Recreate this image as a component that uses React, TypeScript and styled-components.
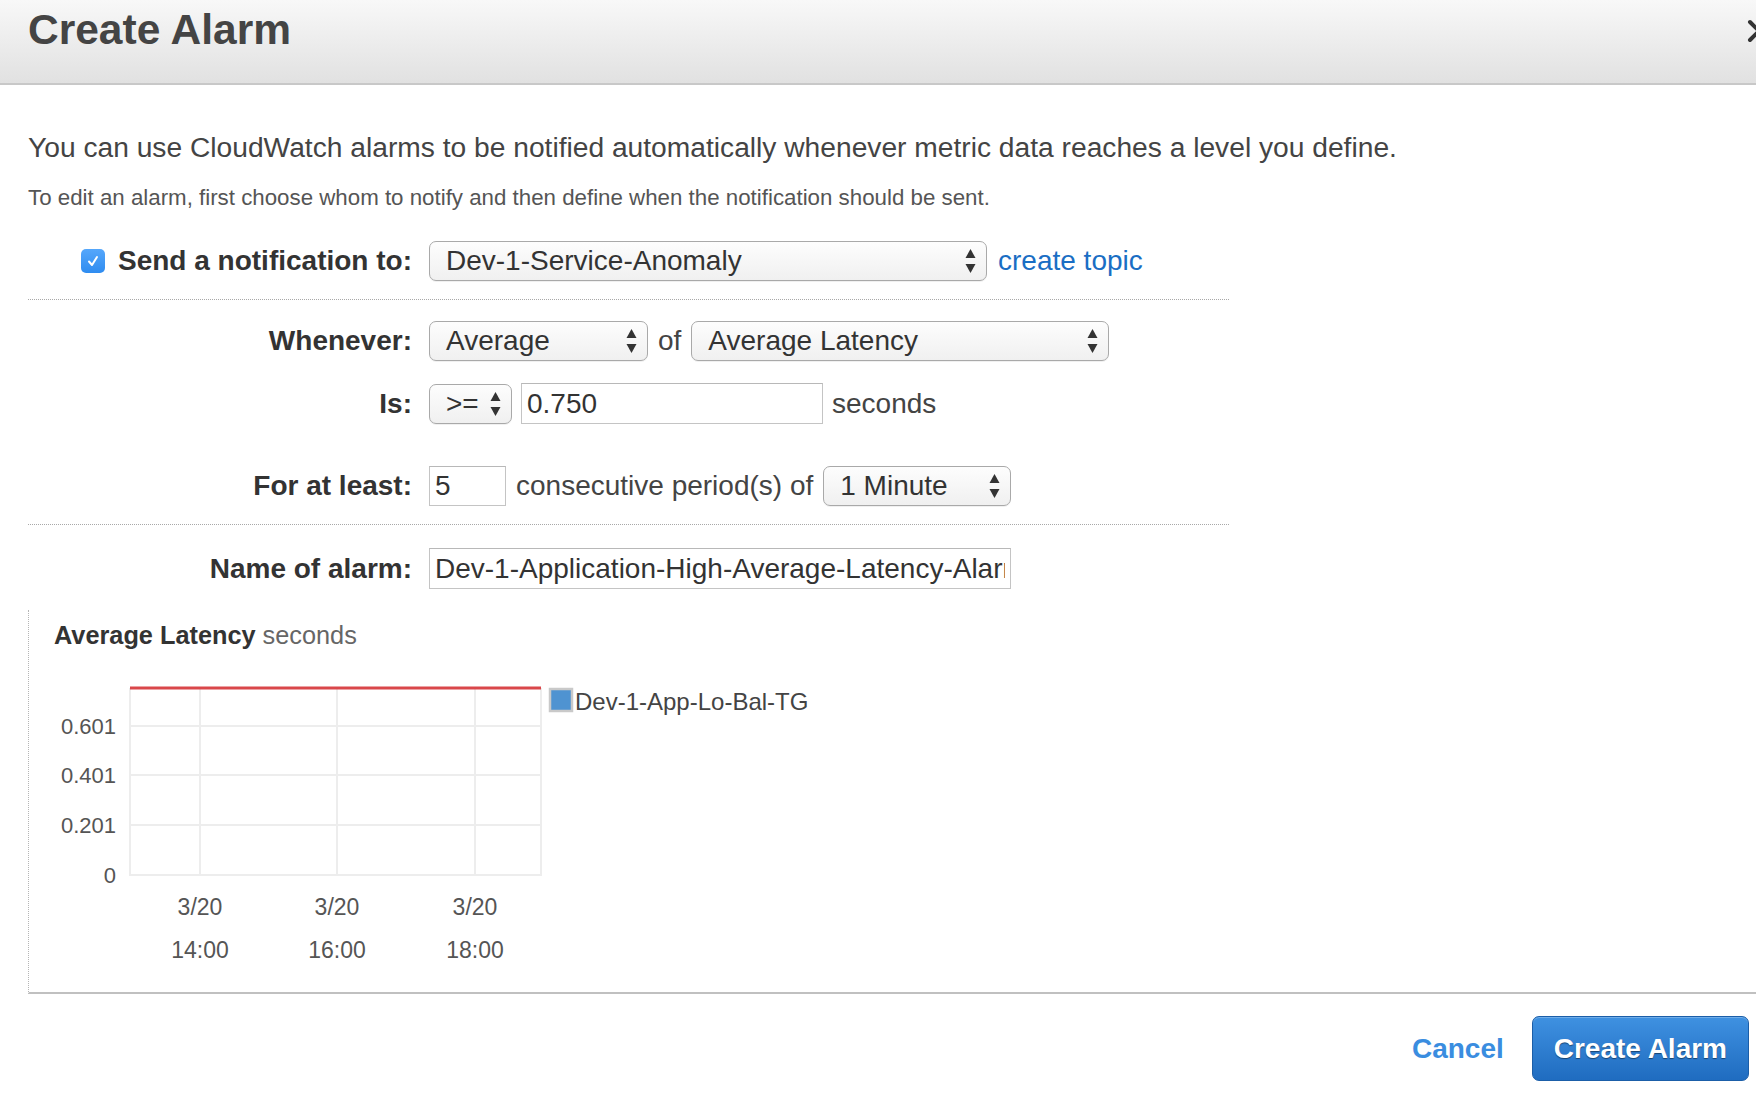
import React from "react";
import styled, { createGlobalStyle } from "styled-components";

const GlobalStyle = createGlobalStyle`
  html, body { margin: 0; padding: 0; background: #fff; }
  body {
    font-family: "Liberation Sans", Arial, Helvetica, sans-serif;
    color: #444;
    overflow: hidden;
  }
  * { box-sizing: border-box; }
`;

const Page = styled.div`
  position: relative;
  width: 1756px;
  height: 1096px;
  overflow: hidden;
  background: #fff;
`;

const Header = styled.header`
  position: relative;
  height: 85px;
  padding: 9px 0 0 28px;
  background: linear-gradient(#f8f8f8, #e1e1e1);
  border-bottom: 2px solid #c8c8c8;
`;

const Title = styled.h1`
  margin: 0;
  font-size: 42.5px;
  line-height: 42px;
  font-weight: 700;
  color: #444;
`;

const CloseButton = styled.button`
  position: absolute;
  top: 18px;
  right: -16px;
  width: 26px;
  height: 26px;
  padding: 0;
  border: 0;
  background: none;
`;

const Body = styled.main`
  padding: 45px 0 0 28px;
`;

const Lead = styled.p`
  margin: 0;
  font-size: 28.2px;
  line-height: 34px;
  color: #444;
`;

const Hint = styled.p`
  margin: 20px 0 0;
  font-size: 22.3px;
  line-height: 28px;
  color: #555;
`;

const Form = styled.div`
  width: 1201px;
  margin-top: 29px;
`;

const Row = styled.div<{ $mt?: number }>`
  display: grid;
  grid-template-columns: 384px auto;
  column-gap: 17px;
  align-items: center;
  margin-top: ${(p) => p.$mt ?? 0}px;
`;

const Label = styled.label`
  justify-self: end;
  display: flex;
  align-items: center;
  gap: 13px;
  font-size: 28px;
  line-height: 40px;
  font-weight: 700;
  color: #333;
`;

const Controls = styled.div<{ $gap?: number }>`
  display: flex;
  align-items: center;
  gap: ${(p) => p.$gap ?? 9}px;
  font-size: 28px;
  color: #444;
`;

const Divider = styled.hr`
  margin: 18px 0 0;
  border: 0;
  border-top: 1px dotted #a8a8a8;
  height: 0;
`;

const Checkbox = styled.span`
  display: inline-flex;
  align-items: center;
  justify-content: center;
  width: 24px;
  height: 24px;
  border-radius: 5px;
  background: linear-gradient(#55a7fb, #2f8cf0);
`;

const SelectBox = styled.div<{ $w: number }>`
  width: ${(p) => p.$w}px;
  height: 40px;
  display: flex;
  align-items: center;
  justify-content: space-between;
  padding: 0 10px 0 16px;
  border: 1px solid #a9a9a9;
  border-radius: 7px;
  background: linear-gradient(#fdfdfd, #f0f0f0);
  box-shadow: 0 1px 0 rgba(0, 0, 0, 0.06);
  font-size: 28px;
  color: #333;
  white-space: nowrap;
`;

const TextInput = styled.input<{ $w: number; $h?: number }>`
  width: ${(p) => p.$w}px;
  height: ${(p) => p.$h ?? 40}px;
  padding: 0 5px;
  border: 1px solid #c4c4c4;
  border-top-color: #b8b8b8;
  border-radius: 0;
  background: #fff;
  font-family: inherit;
  font-size: 28px;
  color: #333;
  outline: none;
`;

const Link = styled.a`
  font-size: 28px;
  color: #1a6ec4;
  text-decoration: none;
`;

const ChartPanel = styled.section`
  margin-top: 21px;
  padding: 10px 0 22px 25px;
  border-left: 1px dotted #b5b5b5;
  border-bottom: 2px solid #c0c0c0;
`;

const ChartTitle = styled.h2`
  margin: 0;
  font-size: 25.3px;
  line-height: 30px;
  font-weight: 700;
  color: #333;
`;

const Unit = styled.span`
  font-weight: 400;
  color: #666;
`;

const ChartSvg = styled.svg`
  display: block;
  margin-top: 20px;
  font-family: "Liberation Sans", Arial, sans-serif;
`;

const AxisText = styled.text<{ $size?: number }>`
  font-size: ${(p) => p.$size ?? 22}px;
  fill: #555;
`;

const LegendText = styled.text`
  font-size: 24px;
  fill: #444;
`;

const Footer = styled.footer`
  display: flex;
  justify-content: flex-end;
  align-items: center;
  gap: 28px;
  padding: 22px 7px 0 0;
`;

const CancelLink = styled.a`
  font-size: 28px;
  font-weight: 700;
  color: #3a8de0;
  text-decoration: none;
`;

const PrimaryButton = styled.button`
  height: 65px;
  padding: 0 21px;
  border: 1px solid #1b5ea8;
  border-radius: 7px;
  background: linear-gradient(#3f91e1, #1f6cc0);
  box-shadow: inset 0 1px 0 rgba(255, 255, 255, 0.25);
  font-family: inherit;
  font-size: 28px;
  font-weight: 700;
  color: #fff;
  text-shadow: 0 1px 1px rgba(0, 0, 0, 0.45);
`;

const Arrows = () => (
  <svg width="11" height="26" viewBox="0 0 11 26">
    <polygon points="0.5,10 5.5,1 10.5,10" fill="#333" />
    <polygon points="0.5,16 5.5,25 10.5,16" fill="#333" />
  </svg>
);

const Select = ({ w, value }: { w: number; value: string }) => (
  <SelectBox $w={w}>
    <span>{value}</span>
    <Arrows />
  </SelectBox>
);

const yTicks = [
  { label: "0.601", y: 56 },
  { label: "0.401", y: 105 },
  { label: "0.201", y: 155 },
  { label: "0", y: 205 },
];
const xTicks = [
  { x: 146, time: "14:00" },
  { x: 283, time: "16:00" },
  { x: 421, time: "18:00" },
];

const Chart = () => (
  <ChartSvg width="780" height="300" viewBox="0 0 780 300">
    {yTicks.map((t) => (
      <line key={t.label} x1="76" x2="487" y1={t.y} y2={t.y} stroke="#ededed" strokeWidth="2" />
    ))}
    <line x1="76" x2="76" y1="18" y2="206" stroke="#ededed" strokeWidth="2" />
    <line x1="487" x2="487" y1="18" y2="206" stroke="#ededed" strokeWidth="2" />
    {xTicks.map((t) => (
      <line key={t.time} x1={t.x} x2={t.x} y1="18" y2="206" stroke="#ededed" strokeWidth="2" />
    ))}
    <line x1="76" x2="487" y1="18" y2="18" stroke="#d9474a" strokeWidth="3" />
    {yTicks.map((t) => (
      <AxisText key={t.label} x="62" y={t.y + 8} textAnchor="end">
        {t.label}
      </AxisText>
    ))}
    {xTicks.map((t) => (
      <g key={t.time}>
        <AxisText $size={23} x={t.x} y="245" textAnchor="middle">
          3/20
        </AxisText>
        <AxisText $size={23} x={t.x} y="288" textAnchor="middle">
          {t.time}
        </AxisText>
      </g>
    ))}
    <rect x="496" y="19" width="22" height="22" fill="#4f93d1" stroke="#c9c9c9" strokeWidth="2.5" />
    <LegendText x="521" y="40">
      Dev-1-App-Lo-Bal-TG
    </LegendText>
  </ChartSvg>
);

export default function App() {
  return (
    <Page>
      <GlobalStyle />
      <Header>
        <Title>Create Alarm</Title>
        <CloseButton aria-label="Close">
          <svg width="26" height="26" viewBox="0 0 26 26">
            <path d="M4 4 L22 22 M22 4 L4 22" stroke="#333" strokeWidth="4" strokeLinecap="round" />
          </svg>
        </CloseButton>
      </Header>
      <Body>
        <Lead>
          You can use CloudWatch alarms to be notified automatically whenever metric data reaches a level you define.
        </Lead>
        <Hint>To edit an alarm, first choose whom to notify and then define when the notification should be sent.</Hint>
        <Form>
          <Row>
            <Label>
              <Checkbox>
                <svg width="16" height="16" viewBox="0 0 16 16">
                  <path d="M4 8.5 L7 12 L12 4" stroke="#fff" strokeWidth="2" fill="none" strokeLinecap="round" strokeLinejoin="round" />
                </svg>
              </Checkbox>
              Send a notification to:
            </Label>
            <Controls $gap={11}>
              <Select w={558} value="Dev-1-Service-Anomaly" />
              <Link href="#">create topic</Link>
            </Controls>
          </Row>
          <Divider />
          <Row $mt={21}>
            <Label>Whenever:</Label>
            <Controls $gap={10}>
              <Select w={219} value="Average" />
              <span>of</span>
              <Select w={418} value="Average Latency" />
            </Controls>
          </Row>
          <Row $mt={22}>
            <Label>Is:</Label>
            <Controls $gap={9}>
              <Select w={83} value=">=" />
              <TextInput $w={302} $h={41} value="0.750" readOnly />
              <span>seconds</span>
            </Controls>
          </Row>
          <Row $mt={42}>
            <Label>For at least:</Label>
            <Controls $gap={10}>
              <TextInput $w={77} value="5" readOnly />
              <span>consecutive period(s) of</span>
              <Select w={188} value="1 Minute" />
            </Controls>
          </Row>
          <Divider />
          <Row $mt={23}>
            <Label>Name of alarm:</Label>
            <Controls>
              <TextInput $w={582} $h={41} value="Dev-1-Application-High-Average-Latency-Alarm" readOnly />
            </Controls>
          </Row>
        </Form>
        <ChartPanel>
          <ChartTitle>
            Average Latency <Unit>seconds</Unit>
          </ChartTitle>
          <Chart />
        </ChartPanel>
        <Footer>
          <CancelLink href="#">Cancel</CancelLink>
          <PrimaryButton>Create Alarm</PrimaryButton>
        </Footer>
      </Body>
    </Page>
  );
}
